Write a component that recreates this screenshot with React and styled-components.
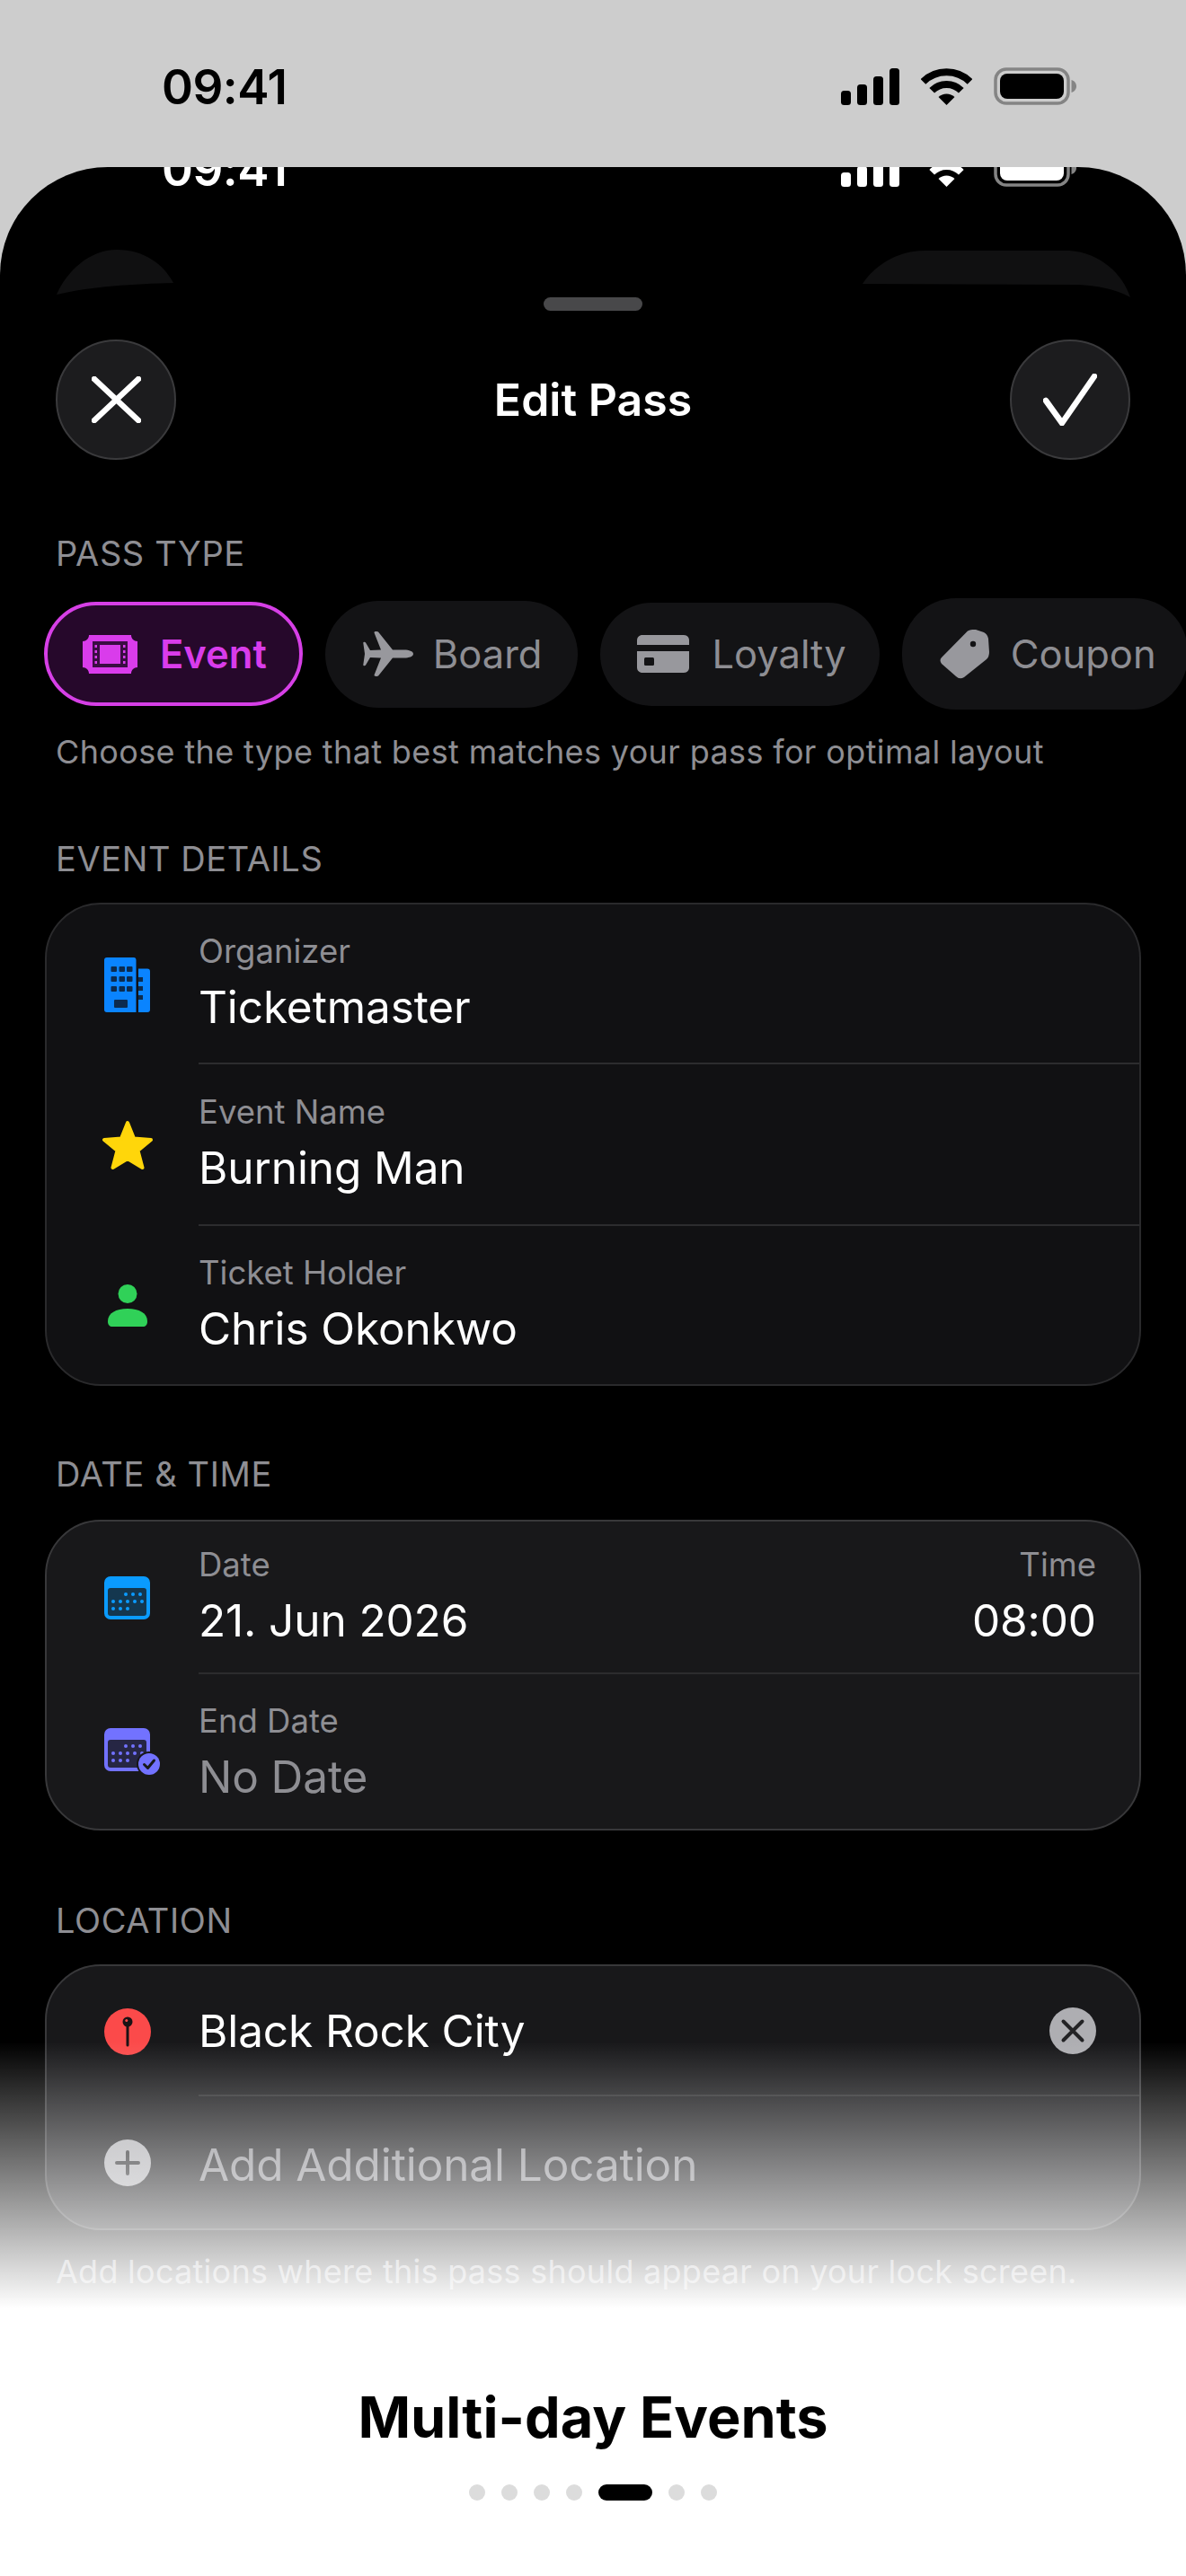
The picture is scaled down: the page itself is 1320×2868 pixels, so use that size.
import React from "react";
import styled, { createGlobalStyle } from "styled-components";

const Global = createGlobalStyle`
  html, body { margin: 0; padding: 0; background: #ccc; }
  * { box-sizing: border-box; }
  body { font-family: Inter, "Noto Sans", "Liberation Sans", sans-serif; }
`;

const Page = styled.div`
  width: 1320px;
  height: 2868px;
  background: #cdcdcd;
  overflow: hidden;
`;

const TopBar = styled.header`
  height: 186px;
  padding-top: 75px;
`;

const StatusRow = styled.div`
  flex: none;
  width: 100%;
  height: 42px;
  padding: 0 122px 0 180px;
  display: flex;
  align-items: center;
  justify-content: space-between;
  color: ${(p) => p.$color};
`;

const Clock = styled.span`
  margin-top: 2px;
  font-size: 53px;
  font-weight: 600;
  line-height: 42px;
  letter-spacing: -0.5px;
`;

const StatusIcons = styled.div`
  display: flex;
  align-items: center;
  gap: 24px;
`;

const Sheet = styled.main`
  position: relative;
  height: 2682px;
  background: #000;
  border-radius: 120px 120px 0 0;
  overflow: hidden;
`;

const StatusClip = styled.div`
  height: 22px;
  display: flex;
  align-items: flex-end;
`;

const Domes = styled.svg`
  position: absolute;
  top: 0;
  left: 0;
`;

const Grabber = styled.div`
  width: 110px;
  height: 15px;
  margin: 123px auto 0;
  background: #48484a;
  border-radius: 8px;
`;

const NavBar = styled.div`
  height: 134px;
  margin-top: 32px;
  padding: 0 62px;
  display: flex;
  align-items: center;
  justify-content: space-between;
`;

const RoundButton = styled.button`
  width: 134px;
  height: 134px;
  padding: 0;
  border-radius: 50%;
  background: #1c1c1e;
  border: 2px solid #3a3a3c;
  display: flex;
  align-items: center;
  justify-content: center;
`;

const Title = styled.h1`
  margin: 0;
  color: #fff;
  font-size: 50px;
  line-height: 60px;
  font-weight: 600;
`;

const Section = styled.section`
  margin-top: ${(p) => p.$top}px;
`;

const SectionLabel = styled.h2`
  margin: 0 0 ${(p) => p.$gap ?? 27}px 62px;
  color: #8e8e93;
  font-size: 38px;
  line-height: 44px;
  font-weight: 400;
  letter-spacing: 0.6px;
`;

const PillRow = styled.div`
  height: 124px;
  margin-top: 28px;
  padding-left: 49px;
  display: flex;
  align-items: center;
  gap: 25px;
  width: 1400px;
`;

const Pill = styled.div`
  flex: none;
  height: ${(p) => p.$h}px;
  border-radius: 60px;
  padding: 0 ${(p) => p.$right}px 0 ${(p) => p.$left}px;
  display: flex;
  align-items: center;
  gap: ${(p) => p.$gap}px;
  font-size: 43.5px;
  line-height: 56px;
  background: ${(p) => (p.$active ? "#26082b" : "#131315")};
  border: ${(p) => (p.$active ? "4px solid #d63fe6" : "none")};
  color: ${(p) => (p.$active ? "#d93ceb" : "#8e8e93")};
  font-weight: ${(p) => (p.$active ? 600 : 400)};
`;

const Hint = styled.p`
  margin: ${(p) => p.$top}px 0 0 62px;
  color: #8e8e93;
  font-size: 36px;
  line-height: 44px;
  letter-spacing: ${(p) => p.$track}px;
  white-space: nowrap;
`;

const Card = styled.div`
  margin: 0 50px;
  border-radius: 62px;
  border: 2px solid ${(p) => p.$border};
  background: ${(p) => p.$bg};
  overflow: hidden;
`;

const Row = styled.div`
  height: ${(p) => p.$h}px;
  display: flex;
  align-items: stretch;
`;

const IconSlot = styled.div`
  flex: 0 0 169px;
  padding-left: 10px;
  display: flex;
  align-items: center;
  justify-content: center;
`;

const RowBody = styled.div`
  flex: 1;
  min-width: 0;
  padding: ${(p) => p.$pad ?? 0}px 48px 0 0;
  display: flex;
  align-items: center;
  justify-content: space-between;
  border-bottom: ${(p) => (p.$last ? "none" : "2px solid #2c2c2e")};
`;

const Fields = styled.div`
  display: flex;
  flex-direction: column;
  gap: 11px;
  padding-bottom: 2px;
  align-items: ${(p) => (p.$end ? "flex-end" : "flex-start")};
`;

const Label = styled.span`
  color: #8e8e93;
  font-size: 36.5px;
  line-height: 42px;
`;

const Value = styled.span`
  color: ${(p) => (p.$muted ? "#8e8e93" : "#fff")};
  font-size: 49.5px;
  line-height: 60px;
  letter-spacing: -0.1px;
  white-space: nowrap;
`;

const Footer = styled.div`
  position: absolute;
  left: 0;
  right: 0;
  bottom: 0;
  display: flex;
  flex-direction: column;
  pointer-events: none;
`;

const Fade = styled.div`
  height: 297px;
  background: linear-gradient(to bottom, rgba(255, 255, 255, 0), #fff);
`;

const Caption = styled.div`
  height: 298px;
  background: #fff;
  padding-top: 81px;
  display: flex;
  flex-direction: column;
  align-items: center;
`;

const CaptionTitle = styled.div`
  color: #000;
  font-size: 63px;
  line-height: 80px;
  font-weight: 700;
`;

const Dots = styled.div`
  margin-top: 35px;
  display: flex;
  gap: 18px;
`;

const Dot = styled.span`
  width: ${(p) => (p.$active ? 60 : 18)}px;
  height: 18px;
  border-radius: 9px;
  background: ${(p) => (p.$active ? "#000" : "#dcdcdc")};
`;

const StatusGlyphs = ({ color, fill }) => (
  <StatusIcons>
    <svg width="65" height="42" viewBox="0 0 65 42" fill={color}>
      <rect x="0" y="26" width="11" height="16" rx="3.5" />
      <rect x="18" y="19" width="11" height="23" rx="3.5" />
      <rect x="36" y="10" width="11" height="32" rx="3.5" />
      <rect x="54" y="1" width="11" height="41" rx="3.5" />
    </svg>
    <svg width="57" height="42" viewBox="0 0 57 42">
      <g fill="none" stroke={color} strokeWidth="8">
        <path d="M2.5 16A37 37 0 0 1 54.5 16" />
        <path d="M12.2 25.7A23 23 0 0 1 44.8 25.7" />
      </g>
      <path d="M28.5 42L19.5 33A13 13 0 0 1 37.5 33Z" fill={color} />
    </svg>
    <svg width="92" height="42" viewBox="0 0 92 42">
      <rect x="2" y="2" width="81" height="38" rx="12" fill="none" stroke="#848484" strokeWidth="3.5" />
      <rect x="7" y="7" width="71" height="28" rx="8" fill={fill} />
      <path d="M86.5 14C90 15 92 18 92 21S90 27 86.5 28Z" fill="#848484" />
    </svg>
  </StatusIcons>
);

const TicketIcon = () => (
  <svg width="61" height="43" viewBox="0 0 61 43">
    <path d="M7 0H54C54 4 57 7 61 7V36C57 36 54 39 54 43H7C7 39 4 36 0 36V7C4 7 7 4 7 0Z" fill="#d93ceb" />
    <rect x="11" y="7" width="39" height="29" fill="#3a0d42" />
    <rect x="19" y="11" width="23" height="21" fill="#d93ceb" />
    <g fill="#d93ceb">
      <rect x="13.5" y="11" width="2.5" height="3" />
      <rect x="13.5" y="17" width="2.5" height="3" />
      <rect x="13.5" y="23" width="2.5" height="3" />
      <rect x="13.5" y="29" width="2.5" height="3" />
      <rect x="45" y="11" width="2.5" height="3" />
      <rect x="45" y="17" width="2.5" height="3" />
      <rect x="45" y="23" width="2.5" height="3" />
      <rect x="45" y="29" width="2.5" height="3" />
    </g>
  </svg>
);

const PlaneIcon = () => (
  <svg width="56" height="50" viewBox="0 0 56 50" fill="#98989d">
    <path d="M56 25C56 22 51 20.5 46 20.5L33 20.5L17 0.5C16 -0.3 12 -0.3 12.5 1.5L20 20.5L8 21L3 12.5C2.5 11.5 0 11.5 0.3 13L2 25L0.3 37C0 38.5 2.5 38.5 3 37.5L8 29L20 29.5L12.5 48.5C12 50.3 16 50.3 17 49.5L33 29.5L46 29.5C51 29.5 56 28 56 25Z" />
  </svg>
);

const CardIcon = () => (
  <svg width="58" height="42" viewBox="0 0 58 42">
    <path d="M0 11V6C0 2.5 2.5 0 6 0H52C55.5 0 58 2.5 58 6V11Z" fill="#98989d" />
    <path d="M0 18H58V36C58 39.5 55.5 42 52 42H6C2.5 42 0 39.5 0 36Z" fill="#98989d" />
    <rect x="8" y="25" width="11" height="9" rx="1.5" fill="#131315" />
  </svg>
);

const TagIcon = () => (
  <svg width="55" height="55" viewBox="0 0 55 55">
    <path d="M31 1.5Q35 -0.5 40 0L49 3Q53 5 54 10L55 25Q55 30 52 33L27 53Q22 56 18 52L2 38Q-1 34 2 31Z" fill="#98989d" />
    <circle cx="37" cy="16" r="3.2" fill="#131315" />
  </svg>
);

const BuildingIcon = () => (
  <svg width="51" height="61" viewBox="0 0 51 61">
    <path d="M3 0H33C34.5 0 35.5 1 35.5 3V61H3C1 61 0 60 0 58V3C0 1 1 0 3 0Z" fill="#0a84ff" />
    <path d="M38 12.5H48C50 12.5 51 13.5 51 15.500V58C51 60 50 61 48 61H38Z" fill="#0a84ff" />
    <g fill="#0c2b4f">
      <rect x="7.500" y="10" width="6.500" height="6" rx="1" />
      <rect x="16.500" y="10" width="6.500" height="6" rx="1" />
      <rect x="25" y="10" width="6.500" height="6" rx="1" />
      <rect x="7.500" y="21" width="6.500" height="6" rx="1" />
      <rect x="16.500" y="21" width="6.500" height="6" rx="1" />
      <rect x="25" y="21" width="6.500" height="6" rx="1" />
      <rect x="7.500" y="32" width="6.500" height="6" rx="1" />
      <rect x="16.500" y="32" width="6.500" height="6" rx="1" />
      <rect x="25" y="32" width="6.500" height="6" rx="1" />
      <rect x="11" y="47" width="15" height="9" rx="1" />
      <rect x="38" y="22" width="5" height="5" />
      <rect x="38" y="32" width="5" height="5" />
      <rect x="38" y="42" width="5" height="5" />
    </g>
  </svg>
);

const StarIcon = () => (
  <svg width="58" height="56" viewBox="0 0 58 56">
    <path d="M29 3L36 20.500L55 22L40.500 34L45.500 53L29 43L12.500 53L17.500 34L3 22L22 20.500Z" fill="#ffd60a" stroke="#ffd60a" strokeWidth="4" strokeLinejoin="round" />
  </svg>
);

const PersonIcon = () => (
  <svg width="44" height="47" viewBox="0 0 44 47" fill="#30d158">
    <circle cx="22" cy="10.500" r="10.500" />
    <path d="M0 41C0 32 9 27 22 27S44 32 44 41C44 45 42 47 39 47H5C2 47 0 45 0 41Z" />
  </svg>
);

const CalendarIcon = ({ color, ink }) => {
  const dots = [
    [24, 20], [32, 20], [40, 20],
    [10, 28], [18, 28], [26, 28], [34, 28], [42, 28],
    [10, 36], [18, 36], [26, 36],
  ];
  return (
    <>
      <rect x="0" y="0" width="51" height="48" rx="7" fill={color} />
      <rect x="4" y="13" width="43" height="31" rx="3" fill={ink} />
      {dots.map(([x, y]) => (
        <circle key={`${x}-${y}`} cx={x} cy={y} r="2" fill={color} />
      ))}
    </>
  );
};

const PinBadge = () => (
  <svg width="52" height="52" viewBox="0 0 52 52">
    <circle cx="26" cy="26" r="26" fill="#fb4a4a" />
    <path d="M26 18V41" stroke="#1a1214" strokeWidth="3" strokeLinecap="round" />
    <circle cx="26" cy="15" r="5.500" fill="#1a1214" />
    <circle cx="24.800" cy="13.500" r="1.500" fill="#fb4a4a" />
  </svg>
);

const GlyphBadge = ({ glyph }) => (
  <svg width="52" height="52" viewBox="0 0 52 52">
    <circle cx="26" cy="26" r="26" fill="#aeaeb2" />
    <path d={glyph} stroke="#232325" strokeWidth="4" strokeLinecap="round" fill="none" />
  </svg>
);

const dotIndexes = [0, 1, 2, 3, 4, 5, 6];

export default function App() {
  return (
    <Page>
      <Global />
      <TopBar>
        <StatusRow $color="#000">
          <Clock>09:41</Clock>
          <StatusGlyphs color="#000" fill="#000" />
        </StatusRow>
      </TopBar>
      <Sheet>
        <Domes width="1320" height="160" viewBox="0 0 1320 160" fill="#101011">
          <path d="M63 142C75 115 100 92 130 92C160 92 182 108 193 129C150 130 100 133 63 142Z" />
          <path d="M960 130C975 108 1000 93 1030 93H1190C1225 95 1250 120 1258 145C1240 135 1220 132 1200 131Z" />
        </Domes>
        <StatusClip>
          <StatusRow $color="#fff">
            <Clock>09:41</Clock>
            <StatusGlyphs color="#fff" fill="#fff" />
          </StatusRow>
        </StatusClip>
        <Grabber />
        <NavBar>
          <RoundButton aria-label="Close">
            <svg width="55" height="52" viewBox="0 0 55 52" fill="none" stroke="#fff" strokeWidth="6.5" strokeLinecap="round">
              <path d="M3 3L52 49M52 3L3 49" />
            </svg>
          </RoundButton>
          <Title>Edit Pass</Title>
          <RoundButton aria-label="Save">
            <svg width="60" height="58" viewBox="0 0 60 58" fill="none" stroke="#fff" strokeWidth="6.5" strokeLinecap="round" strokeLinejoin="round">
              <path d="M3 30L21 55L57 3" />
            </svg>
          </RoundButton>
        </NavBar>

        <Section $top={82}>
          <SectionLabel $gap={0}>PASS TYPE</SectionLabel>
          <PillRow>
            <Pill $active $h={116} $left={39} $right={36} $gap={25}><TicketIcon />Event</Pill>
            <Pill $h={119} $left={42} $right={40} $gap={22}><PlaneIcon />Board</Pill>
            <Pill $h={115} $left={41} $right={37} $gap={25}><CardIcon />Loyalty</Pill>
            <Pill $h={124} $left={42} $right={35} $gap={24}><TagIcon />Coupon</Pill>
          </PillRow>
          <Hint $top={25} $track={0.37}>Choose the type that best matches your pass for optimal layout</Hint>
        </Section>

        <Section $top={75}>
          <SectionLabel>EVENT DETAILS</SectionLabel>
          <Card $bg="#111113" $border="#2a2a2c">
            <Row $h={178}>
              <IconSlot><BuildingIcon /></IconSlot>
              <RowBody>
                <Fields><Label>Organizer</Label><Value>Ticketmaster</Value></Fields>
              </RowBody>
            </Row>
            <Row $h={180}>
              <IconSlot><StarIcon /></IconSlot>
              <RowBody>
                <Fields><Label>Event Name</Label><Value>Burning Man</Value></Fields>
              </RowBody>
            </Row>
            <Row $h={176}>
              <IconSlot><PersonIcon /></IconSlot>
              <RowBody $last>
                <Fields><Label>Ticket Holder</Label><Value>Chris Okonkwo</Value></Fields>
              </RowBody>
            </Row>
          </Card>
        </Section>

        <Section $top={76}>
          <SectionLabel $gap={29}>DATE &amp; TIME</SectionLabel>
          <Card $bg="#18181a" $border="#38383a">
            <Row $h={170}>
              <IconSlot>
                <svg width="51" height="48" viewBox="0 0 51 48">
                  <CalendarIcon color="#0a9bff" ink="#14374f" />
                </svg>
              </IconSlot>
              <RowBody>
                <Fields><Label>Date</Label><Value>21. Jun 2026</Value></Fields>
                <Fields $end><Label>Time</Label><Value>08:00</Value></Fields>
              </RowBody>
            </Row>
            <Row $h={172}>
              <IconSlot>
                <svg width="51" height="52" viewBox="0 0 51 52" style={{ overflow: "visible" }}>
                  <CalendarIcon color="#7272ff" ink="#262644" />
                  <circle cx="50" cy="40" r="14" fill="#18181a" />
                  <circle cx="50" cy="40" r="12" fill="#7272ff" />
                  <path d="M44.500 40.500L48.500 44.500L55.500 36" fill="none" stroke="#18181a" strokeWidth="3" strokeLinecap="round" strokeLinejoin="round" />
                </svg>
              </IconSlot>
              <RowBody $last $pad={5}>
                <Fields><Label>End Date</Label><Value $muted>No Date</Value></Fields>
              </RowBody>
            </Row>
          </Card>
        </Section>

        <Section $top={78}>
          <SectionLabel>LOCATION</SectionLabel>
          <Card $bg="#18181a" $border="#38383a">
            <Row $h={145}>
              <IconSlot><PinBadge /></IconSlot>
              <RowBody>
                <Value>Black Rock City</Value>
                <GlyphBadge glyph="M15.500 15.500L36.500 36.500M36.500 15.500L15.500 36.500" />
              </RowBody>
            </Row>
            <Row $h={147}>
              <IconSlot><GlyphBadge glyph="M26 14V38M14 26H38" /></IconSlot>
              <RowBody $last $pad={4}>
                <Value $muted>Add Additional Location</Value>
              </RowBody>
            </Row>
          </Card>
          <Hint $top={24} $track={0.26}>Add locations where this pass should appear on your lock screen.</Hint>
        </Section>

        <Footer>
          <Fade />
          <Caption>
            <CaptionTitle>Multi-day Events</CaptionTitle>
            <Dots>
              {dotIndexes.map((i) => (
                <Dot key={i} $active={i === 4} />
              ))}
            </Dots>
          </Caption>
        </Footer>
      </Sheet>
    </Page>
  );
}
